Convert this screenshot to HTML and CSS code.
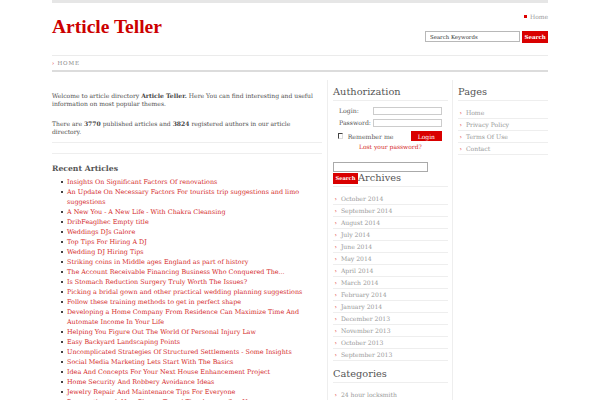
FILE: index.html
```html
<!DOCTYPE html>
<html lang="en">
<head>
<meta charset="utf-8">
<title>Article Teller</title>
<link rel="stylesheet" href="styles.css">
</head>
<body>
<div class="page">
  <div class="topbar"></div>
  <header class="header">
    <h1 class="logo">Article Teller</h1>
    <div class="header-right">
      <div class="toplinks"><span class="home-icon"></span><a href="#">Home</a></div>
      <form class="search">
        <input class="search-input" type="text" value="Search Keywords">
        <button class="btn" type="button">Search</button>
      </form>
    </div>
  </header>
  <nav class="nav"><span class="chev">›</span><a href="#">HOME</a></nav>
  <div class="content">
    <main class="main">
      <div class="intro">
        <p>Welcome to article directory <b>Article Teller.</b> Here You can find interesting and useful information on most popular themes.</p>
        <p>There are <b>3770</b> published articles and <b>3824</b> registered authors in our article directory.</p>
      </div>
      <section class="recent">
        <h2 class="recent-title">Recent Articles</h2>
        <ul class="recent-list">
          <li><a href="#">Insights On Significant Factors Of renovations</a></li>
          <li><a href="#">An Update On Necessary Factors For tourists trip suggestions and limo suggestions</a></li>
          <li><a href="#">A New You - A New Life - With Chakra Cleansing</a></li>
          <li><a href="#">DribFeaglhec Empty title</a></li>
          <li><a href="#">Weddings DJs Galore</a></li>
          <li><a href="#">Top Tips For Hiring A DJ</a></li>
          <li><a href="#">Wedding DJ Hiring Tips</a></li>
          <li><a href="#">Striking coins in Middle ages England as part of history</a></li>
          <li><a href="#">The Account Receivable Financing Business Who Conquered The...</a></li>
          <li><a href="#">Is Stomach Reduction Surgery Truly Worth The Issues?</a></li>
          <li><a href="#">Picking a bridal gown and other practical wedding planning suggestions</a></li>
          <li><a href="#">Follow these training methods to get in perfect shape</a></li>
          <li><a href="#">Developing a Home Company From Residence Can Maximize Time And Automate Income In Your Life</a></li>
          <li><a href="#">Helping You Figure Out The World Of Personal Injury Law</a></li>
          <li><a href="#">Easy Backyard Landscaping Points</a></li>
          <li><a href="#">Uncomplicated Strategies Of Structured Settlements - Some Insights</a></li>
          <li><a href="#">Social Media Marketing Lets Start With The Basics</a></li>
          <li><a href="#">Idea And Concepts For Your Next House Enhancement Project</a></li>
          <li><a href="#">Home Security And Robbery Avoidance Ideas</a></li>
          <li><a href="#">Jewelry Repair And Maintenance Tips For Everyone</a></li>
          <li><a href="#">Browse through New Places: Travel Tips Anyone Can Use</a></li>
        </ul>
      </section>
    </main>
    <aside class="side side1">
      <h2 class="widget-title">Authorization</h2>
      <form class="login">
        <div class="row"><label>Login:</label><input class="field" type="text"></div>
        <div class="row"><label>Password:</label><input class="field" type="password"></div>
        <div class="row remember"><span class="check"></span><span class="remember-text">Remember me</span><button class="btn login-btn" type="button">Login</button></div>
        <a class="lost" href="#">Lost your password?</a>
      </form>
      <form class="side-search">
        <input class="side-search-input" type="text">
        <button class="btn side-search-btn" type="button">Search</button>
      </form>
      <h2 class="widget-title archives-title">Archives</h2>
      <ul class="links">
        <li><a href="#">October 2014</a></li>
        <li><a href="#">September 2014</a></li>
        <li><a href="#">August 2014</a></li>
        <li><a href="#">July 2014</a></li>
        <li><a href="#">June 2014</a></li>
        <li><a href="#">May 2014</a></li>
        <li><a href="#">April 2014</a></li>
        <li><a href="#">March 2014</a></li>
        <li><a href="#">February 2014</a></li>
        <li><a href="#">January 2014</a></li>
        <li><a href="#">December 2013</a></li>
        <li><a href="#">November 2013</a></li>
        <li><a href="#">October 2013</a></li>
        <li><a href="#">September 2013</a></li>
      </ul>
      <h2 class="widget-title categories-title">Categories</h2>
      <ul class="links">
        <li><a href="#">24 hour locksmith</a></li>
      </ul>
    </aside>
    <aside class="side side2">
      <h2 class="widget-title">Pages</h2>
      <ul class="links">
        <li><a href="#">Home</a></li>
        <li><a href="#">Privacy Policy</a></li>
        <li><a href="#">Terms Of Use</a></li>
        <li><a href="#">Contact</a></li>
      </ul>
    </aside>
  </div>
</div>
</body>
</html>
```

FILE: styles.css
```css
* { box-sizing: border-box; }
html, body { margin: 0; padding: 0; background: #fff; }
body { font-family: "DejaVu Serif", serif; color: #555; }
a { text-decoration: none; color: inherit; }
ul { list-style: none; margin: 0; padding: 0; }

.page { width: 496px; margin-left: 52px; }
.topbar { height: 3px; background: #e6e6e6; }

.header { height: 52px; display: flex; justify-content: space-between; align-items: flex-start; }
.logo { margin: 0; padding-top: 14px; font-family: "Liberation Serif", serif; font-weight: bold; font-size: 19.5px; line-height: 20px; color: #cc0000; }
.header-right { display: flex; flex-direction: column; align-items: flex-end; padding-top: 9.7px; }
.toplinks { display: flex; align-items: center; gap: 2.6px; font-size: 6px; line-height: 8px; color: #999; }
.home-icon { width: 3.4px; height: 3.4px; background: #d00; }
.search { display: flex; align-items: center; gap: 2.4px; margin: 10px 0 0; }
.search-input { width: 95px; height: 10.7px; margin: 0; border: 1px solid #b8b8b8; padding: 0 0 0 4px; font: 5.4px "DejaVu Serif", serif; color: #333; outline: none; }
.btn { background: #d90000; color: #fff; border: 0; padding: 0; margin: 0; font: bold 5.5px "DejaVu Serif", serif; }
.search .btn { width: 25.6px; height: 12px; }

.nav { height: 17px; border-top: 1px solid #ebebeb; border-bottom: 2px solid #dcdcdc; display: flex; align-items: center; font-size: 5.5px; line-height: 14px; color: #888; letter-spacing: 0.9px; }
.chev { color: #d33; width: 5.4px; letter-spacing: 0; }

.content { display: flex; margin-top: 8px; }
.main { width: 275px; padding-right: 5px; }
.intro { padding: 11.7px 0 6.6px; border-bottom: 1px solid #eee; font-size: 6.05px; line-height: 8px; color: #505050; }
.intro p { margin: 0; max-width: 262px; }
.intro p + p { margin-top: 12px; }
.intro b { color: #444; }
.recent { margin-top: 10px; border-top: 1px solid #eee; padding-top: 10px; }
.recent-title { margin: 0 0 3px; font-size: 7.7px; line-height: 10px; font-weight: bold; color: #555; }
.recent-list { padding-left: 9px; font-size: 6.4px; line-height: 10px; }
.recent-list li { display: flex; }
.recent-list li::before { content: ""; flex: none; width: 2px; height: 2px; background: #444; margin: 4.2px 4px 0 0; }
.recent-list a { color: #d42a2a; }

.side { border-left: 1px solid #eee; padding-top: 6px; }
.side1 { width: 125px; padding-left: 5px; padding-right: 4px; }
.side2 { width: 96px; padding-left: 5px; }
.widget-title { margin: 0; font-size: 9.8px; line-height: 12px; font-weight: normal; color: #555; padding-bottom: 2px; border-bottom: 1px solid #eee; }

.login { padding: 6px 6.3px 0 6px; font-size: 6.2px; color: #555; }
.row { display: flex; align-items: center; height: 8.4px; margin-bottom: 3.6px; }
.row label { flex: 1; line-height: 8px; }
.field { width: 68.4px; height: 8.4px; margin: 0; padding: 0; border: 1px solid #ccc; outline: none; }
.remember { height: 10.3px; margin-bottom: 1px; margin-left: -1.3px; }
.check { width: 5.3px; height: 5.3px; border: 1px solid #ddd; border-top-color: #444; border-left-color: #444; }
.remember-text { margin-left: 4.7px; }
.login-btn { margin-left: auto; width: 30.7px; height: 10.3px; font-weight: normal; font-size: 6px; }
.lost { display: block; text-align: center; line-height: 10px; font-size: 6px; color: #d42a2a; }

.side-search { margin-top: 10px; }
.side-search-input { display: block; width: 95px; height: 10px; margin: 0; padding: 0; border: 1px solid #aaa; outline: none; }
.side-search-btn { float: left; width: 25px; height: 11.6px; margin-top: 0.4px; font-size: 5.2px; }
.archives-title { padding-top: 0; }
.categories-title { margin-top: 7.5px; }

.links { margin-top: 5.5px; font-size: 6.1px; line-height: 11px; color: #999; }
.links li { border-bottom: 1px solid #eee; padding-left: 1.5px; }
.links li::before { content: "›"; display: inline-block; width: 6.4px; color: #d33; }
```
